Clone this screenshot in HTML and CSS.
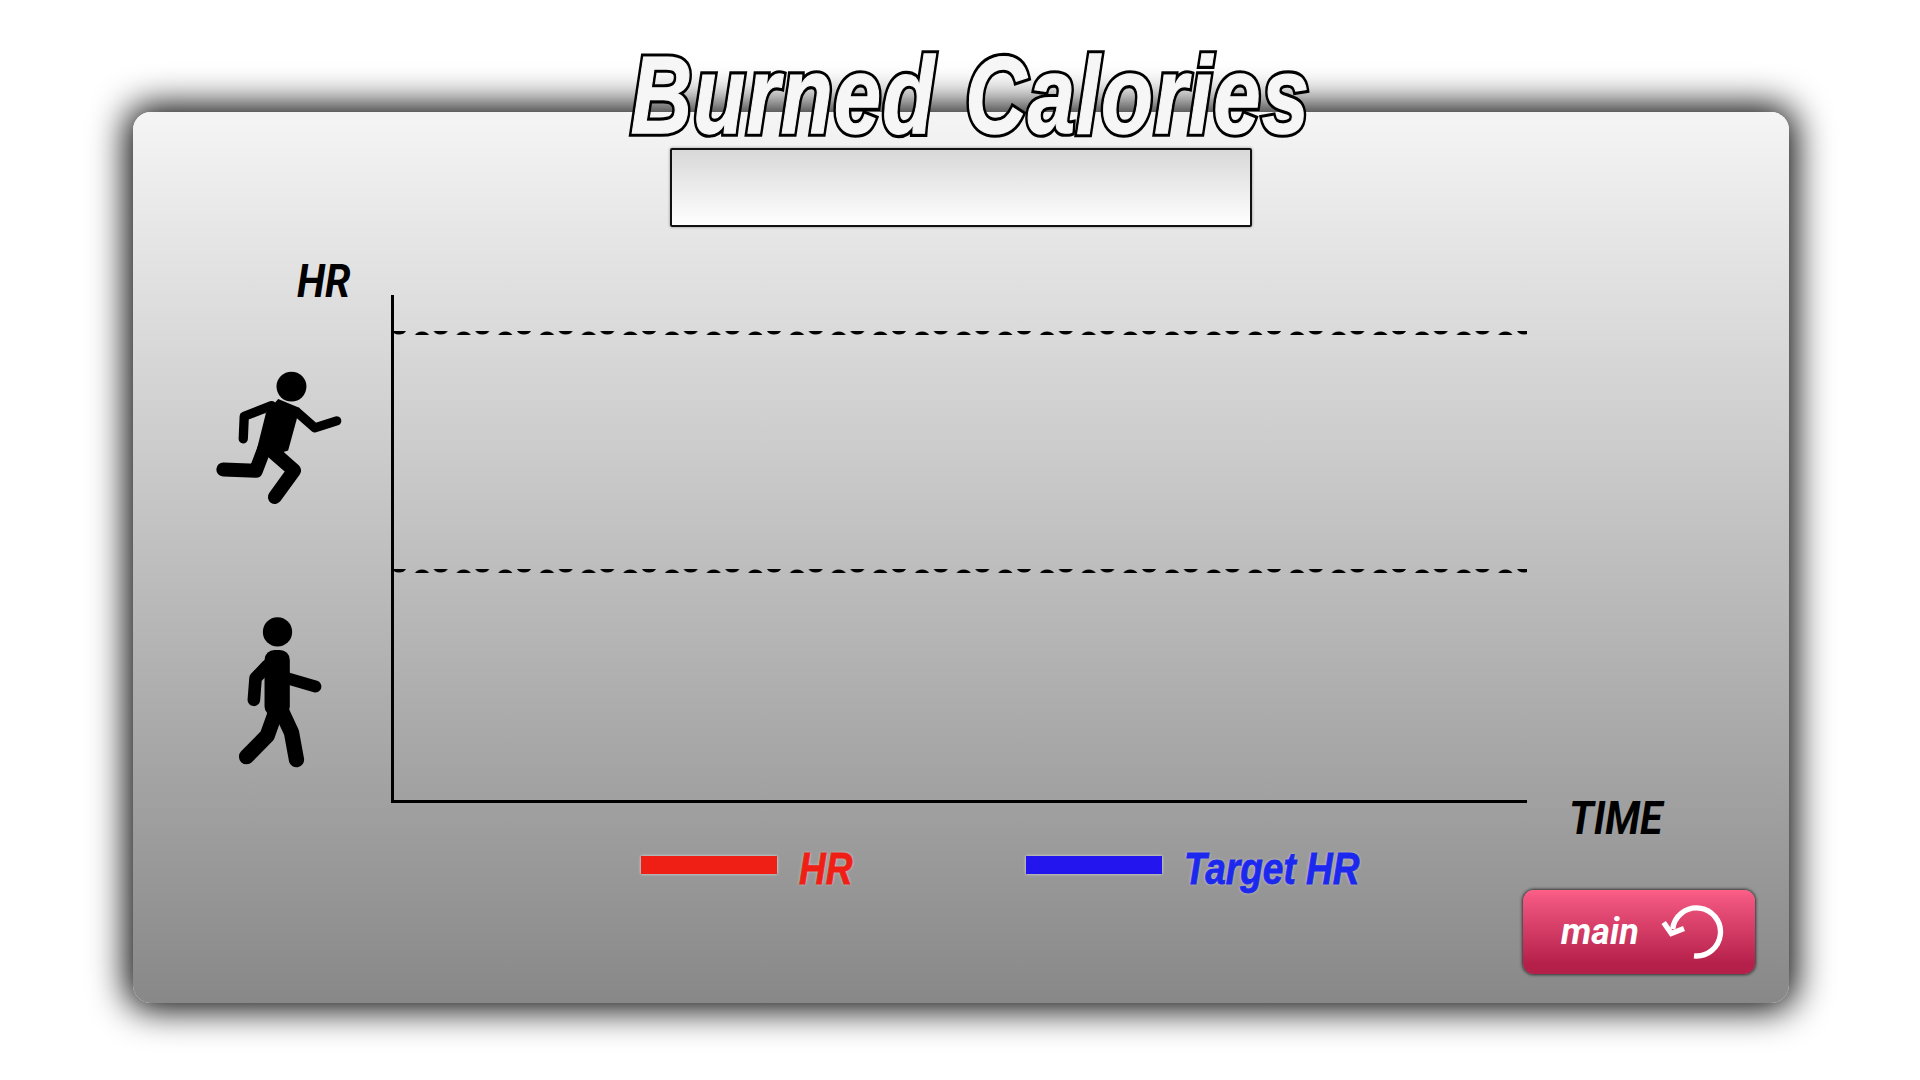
FILE: index.html
```html
<!DOCTYPE html>
<html>
    <head>
        <meta charset="utf-8" />
        <title>Burned Calories</title>
        <link rel="stylesheet" href="styles.css">
    </head>
    <body>
        <main class="card">
            <h1 class="title" data-text="Burned Calories">Burned Calories</h1>
            <div class="value-box"></div>

            <section class="chart">
                <div class="side">
                    <div class="axis-label hr-label">HR</div>
                    <svg class="runner" viewBox="70 355 395 415" width="132" height="138">
                        <circle cx="305" cy="408" r="45" />
                        <polygon points="265,445 330,472 295,600 240,618 200,600 228,488" />
                        <polyline class="limb" stroke-width="28" points="245,465 163,497 160,565" />
                        <polyline class="limb" stroke-width="28" points="322,485 375,532 441,511" />
                        <polyline class="limb" stroke-width="42" points="225,590 198,661 100,657" />
                        <polyline class="limb" stroke-width="42" points="250,605 313,660 255,740" />
                    </svg>
                    <svg class="walker" viewBox="80 75 260 460" width="87" height="153">
                        <circle cx="201" cy="123" r="44" />
                        <rect x="162" y="177" width="76" height="200" rx="30" />
                        <polyline class="limb" stroke-width="38" points="170,225 135,262 130,327" />
                        <polyline class="limb" stroke-width="36" points="230,262 315,287" />
                        <polyline class="limb" stroke-width="46" points="195,365 170,435 108,498" />
                        <polyline class="limb" stroke-width="46" points="215,365 243,425 258,507" />
                    </svg>
                </div>
                <div class="plot">
                    <svg class="ref-line" width="1133" height="6">
                        <defs>
                            <pattern id="dash" width="41.67" height="6" patternUnits="userSpaceOnUse">
                                <path d="M-2 1H12Q10 4.6 5 4.6Q0 4.6 -2 1ZM39.67 1H53.67Q51.67 4.6 46.67 4.6Q41.67 4.6 39.67 1ZM21 5H35Q33 1.4 28 1.4Q23 1.4 21 5Z" />
                            </pattern>
                        </defs>
                        <rect width="1133" height="6" fill="url(#dash)" />
                    </svg>
                    <svg class="ref-line ref-line-low" width="1133" height="6">
                        <rect width="1133" height="6" fill="url(#dash)" />
                    </svg>
                </div>
            </section>

            <div class="axis-label time-label">TIME</div>

            <footer class="footer">
                <div class="legend">
                    <div class="legend-item legend-hr"><span class="swatch"></span><span class="legend-text">HR</span></div>
                    <div class="legend-item legend-target"><span class="swatch"></span><span class="legend-text">Target HR</span></div>
                </div>
                <button class="main-btn" type="button">
                    <span>main</span>
                    <svg viewBox="545 370 195 170" width="65" height="57">
                        <path d="M650 525A72 72 0 1 0 586 445" />
                        <path d="M559 425L582 458L620 443" />
                    </svg>
                </button>
            </footer>
        </main>
    </body>
</html>
```

FILE: styles.css
```css
html,
body {
    margin: 0;
    height: 100%;
    background-color: #ffffff;
    overflow: hidden;
}
.card {
    box-sizing: border-box;
    width: 1656px;
    height: 891px;
    margin: 112px 0 0 133px;
    display: flex;
    flex-direction: column;
    border-radius: 18px;
    background: linear-gradient(to bottom, #f5f5f5, #888888);
    box-shadow: 0 0 36px 6px #000000;
}
.title {
    position: relative;
    margin: -66px 0 0 19px;
    height: 102px;
    line-height: 99px;
    text-align: center;
    font-family: "Liberation Sans", sans-serif;
    font-size: 85px;
    font-weight: bold;
    font-style: italic;
    letter-spacing: 1.2px;
    word-spacing: 5px;
    color: #000000;
    -webkit-text-stroke: 6px #000000;
    transform: scaleY(1.29);
}
.title::after {
    content: attr(data-text);
    position: absolute;
    left: 0;
    right: 0;
    top: 0;
    color: #f6f6f6;
    -webkit-text-stroke: 1px #f6f6f6;
}
.value-box {
    box-sizing: border-box;
    flex: none;
    width: 582px;
    height: 79px;
    margin-left: 537px;
    border: 2px solid #111111;
    border-radius: 2px;
    background: linear-gradient(to bottom, #d8d8d8, #ffffff);
    box-shadow: 0 0 3px rgba(0, 0, 0, 0.4);
}
.chart {
    flex: none;
    display: flex;
    margin-top: 68px;
}
.side {
    width: 258px;
    height: 508px;
    position: relative;
}
.axis-label {
    font-family: Roboto, sans-serif;
    font-size: 41px;
    font-weight: bold;
    font-style: italic;
    line-height: 40px;
    color: #000000;
    transform: scaleY(1.12);
}
.hr-label {
    position: absolute;
    left: 164px;
    top: -34px;
}
.runner {
    position: absolute;
    left: 80px;
    top: 74px;
}
.walker {
    position: absolute;
    left: 104px;
    top: 321px;
}
.runner,
.walker {
    fill: #000000;
}
.limb {
    fill: none;
    stroke: #000000;
    stroke-linecap: round;
    stroke-linejoin: round;
}
.plot {
    box-sizing: border-box;
    width: 1136px;
    height: 508px;
    padding-top: 35px;
    display: flex;
    flex-direction: column;
    border-left: 3px solid #000000;
    border-bottom: 3px solid #000000;
}
.ref-line {
    display: block;
    flex: none;
}
.ref-line-low {
    margin-top: 232px;
}
.time-label {
    flex: none;
    height: 30px;
    line-height: 30px;
    margin-left: 1436px;
}
.footer {
    flex: 1;
    display: flex;
    justify-content: space-between;
    align-items: flex-start;
    padding: 23px 34px 29px 508px;
    box-sizing: border-box;
}
.legend {
    display: flex;
}
.legend-item {
    display: flex;
    align-items: flex-start;
    gap: 22px;
}
.legend-hr {
    width: 385px;
}
.swatch {
    width: 136px;
    height: 18px;
    box-shadow: 0 0 3px rgba(255, 255, 255, 0.7);
}
.legend-hr .swatch {
    background-color: #f01f15;
}
.legend-target .swatch {
    background-color: #2215ee;
}
.legend-text {
    margin-top: -7px;
    font-family: "Liberation Sans", sans-serif;
    font-size: 37px;
    font-weight: bold;
    font-style: italic;
    line-height: 40px;
    white-space: nowrap;
    -webkit-text-stroke: 0.7px currentColor;
    text-shadow: 0 0 3px rgba(255, 255, 255, 0.6);
    transform: scaleY(1.22);
}
.legend-hr .legend-text {
    color: #f01f15;
}
.legend-target .legend-text {
    color: #1c28ee;
}
.main-btn {
    align-self: flex-end;
    width: 232px;
    height: 84px;
    padding: 0 0 0 38px;
    display: flex;
    align-items: center;
    gap: 20px;
    border: none;
    border-radius: 11px;
    background: linear-gradient(to bottom, #ff6088, #f0567f 10%, #b5204a 88%);
    box-shadow: 0 0 3px 1px #333333;
    font-family: Roboto, sans-serif;
    font-size: 36px;
    font-weight: bold;
    font-style: italic;
    color: #ffffff;
}
.main-btn svg {
    fill: none;
    stroke: #ffffff;
    stroke-width: 16;
}
```
